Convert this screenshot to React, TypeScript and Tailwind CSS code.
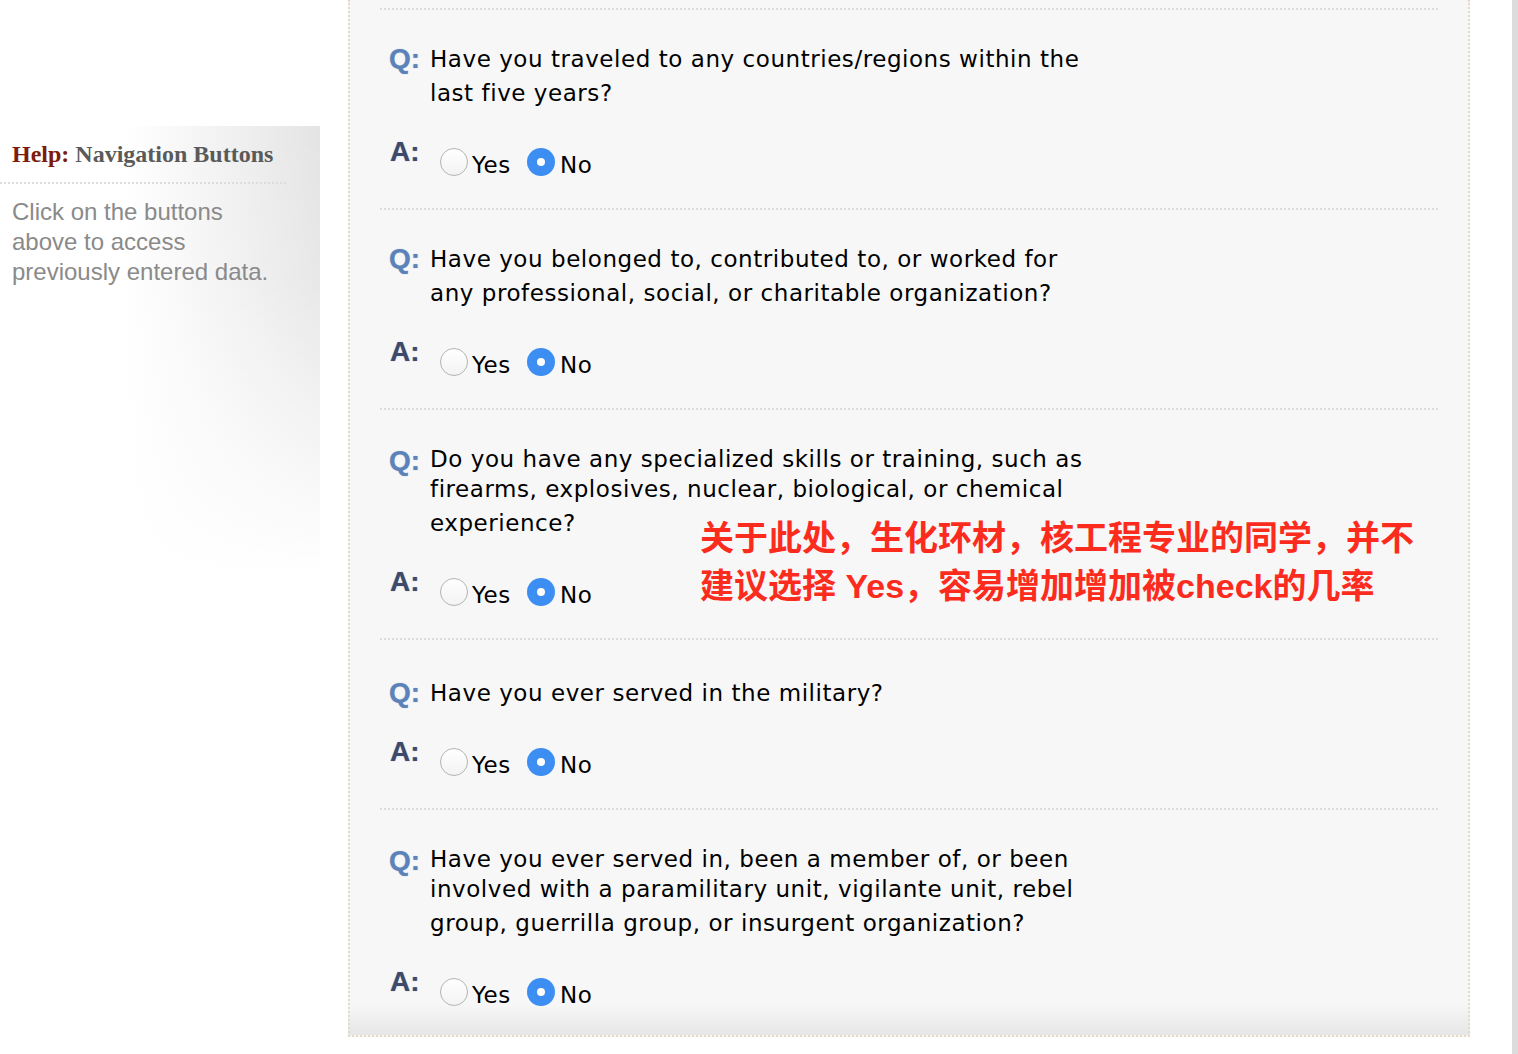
import React from 'react';

type Section = {
  lines: string[];
  pad: string;
  tight?: boolean;
};

const sections: Section[] = [
  { lines: ['Have you traveled to any countries/regions within the', 'last five years?'], pad: 'pt-[32px]' },
  { lines: ['Have you belonged to, contributed to, or worked for', 'any professional, social, or charitable organization?'], pad: 'pt-[32px]' },
  {
    lines: ['Do you have any specialized skills or training, such as', 'firearms, explosives, nuclear, biological, or chemical', 'experience?'],
    pad: 'pt-[34px]',
    tight: true,
  },
  { lines: ['Have you ever served in the military?'], pad: 'pt-[36px]' },
  {
    lines: ['Have you ever served in, been a member of, or been', 'involved with a paramilitary unit, vigilante unit, rebel', 'group, guerrilla group, or insurgent organization?'],
    pad: 'pt-[34px]',
    tight: true,
  },
];

const Radio = ({ checked }: { checked?: boolean }) =>
  checked ? (
    <span className="flex h-[28px] w-[28px] items-center justify-center rounded-full bg-[#3c8ef3]">
      <span className="h-[8px] w-[8px] rounded-full bg-white" />
    </span>
  ) : (
    <span className="h-[28px] w-[28px] rounded-full border border-[#b3b3b3] bg-[linear-gradient(to_bottom,#ffffff,#f3f3f3)]" />
  );

function QA({ section }: { section: Section }) {
  const { lines, tight, pad } = section;
  return (
    <div className={`border-t-2 border-dotted border-[#dcdcdc] ${pad} pb-[32px]`}>
      <div className="flex">
        <div className="w-[50px] shrink-0 pl-[9px] font-['Liberation_Sans',Arial,sans-serif] text-[28px] font-bold leading-[34px] text-[#5b82b9] [text-shadow:0_0_1px_rgba(91,130,185,0.6)]">
          Q:
        </div>
        <div className="font-['DejaVu_Sans',Verdana,sans-serif] text-[23px] tracking-[0.55px] text-black">
          {lines.map((l, i) => {
            const h = tight ? (i < 2 ? 'leading-[30px]' : 'mt-[2px] leading-[34px]') : 'leading-[34px]';
            return (
              <div key={i} className={`whitespace-nowrap ${h}`}>
                {l}
              </div>
            );
          })}
        </div>
      </div>
      <div className="mt-[38px] flex h-[28px] items-center">
        <div className="w-[60px] shrink-0 -translate-y-[10px] pl-[10px] font-['Liberation_Sans',Arial,sans-serif] text-[28px] font-bold leading-[28px] text-[#3e4a69] [text-shadow:0_0_1px_rgba(62,74,105,0.6)]">
          A:
        </div>
        <div className="flex items-center font-['DejaVu_Sans',Verdana,sans-serif] text-[23px] tracking-[0.6px] text-black">
          <Radio />
          <span className="ml-[4px] mt-[6px]">Yes</span>
          <span className="ml-[16px]">
            <Radio checked />
          </span>
          <span className="ml-[5px] mt-[6px]">No</span>
        </div>
      </div>
    </div>
  );
}

export default function App() {
  return (
    <div className="flex h-[1054px] w-[1518px] overflow-hidden bg-white">
      <aside className="w-[320px] shrink-0">
        <div className="mt-[126px] h-[450px] bg-[linear-gradient(to_bottom,rgba(255,255,255,0)_0%,rgba(255,255,255,0.15)_35%,#ffffff_100%),linear-gradient(to_right,#ffffff_40%,#e4e4e4_100%)]">
          <div className="w-[286px] pl-[12px] pt-[13px] font-['Liberation_Serif','Times_New_Roman',serif] text-[24px] font-bold leading-[30px] text-[#5a5a5a]">
            <span className="text-[#7d1b0c]">Help:</span> Navigation Buttons
          </div>
          <div className="mt-[13px] w-[286px] border-t-2 border-dotted border-[#dcdcdc]" />
          <p className="mt-[13px] pl-[12px] font-['Liberation_Sans',Arial,sans-serif] text-[24px] leading-[30px] text-[#8a8a8a]">
            Click on the buttons
            <br />
            above to access
            <br />
            previously entered data.
          </p>
        </div>
      </aside>

      <div className="ml-[28px] w-[1122px] shrink-0 self-start">
        <main className="relative h-[1037px] border-x-2 border-b-2 border-dotted border-[#e3dcc3] bg-[linear-gradient(to_bottom,#f7f7f7_0%,#f7f7f7_97%,#e6e6e6_100%)] pl-[30px] pr-[30px] pt-[8px]">
          {sections.map((s, i) => (
            <QA key={i} section={s} />
          ))}
          <div className="absolute left-[350px] top-[514px] whitespace-nowrap font-['Liberation_Sans','Noto_Sans_CJK_SC',sans-serif] text-[34px] font-bold leading-[48px] text-[#fb2c1d]">
            关于此处，生化环材，核工程专业的同学，并不
            <br />
            建议选择 Yes，容易增加增加被check的几率
          </div>
        </main>
      </div>

      <div className="flex-1" />
      <div className="w-[6px] shrink-0 bg-[#dcdcdc]" />
    </div>
  );
}
